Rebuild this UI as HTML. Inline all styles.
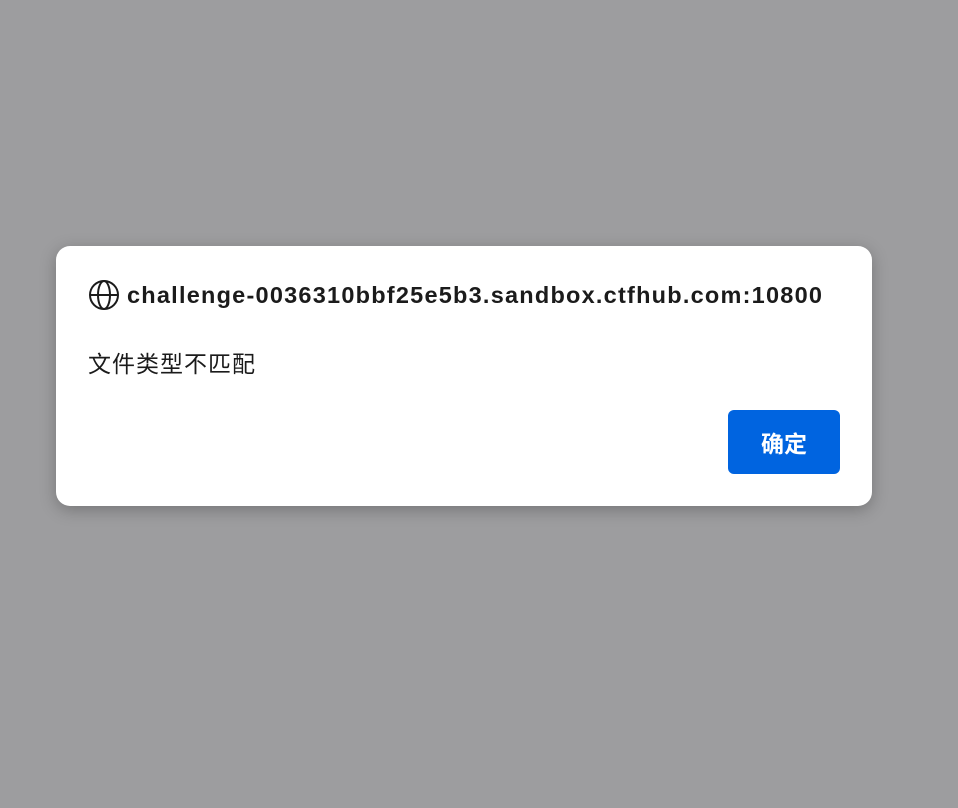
<!DOCTYPE html>
<html><head><meta charset="utf-8"><style>
html,body{margin:0;width:958px;height:808px;background:#9d9d9f;overflow:hidden;font-family:"Liberation Sans","Noto Sans CJK SC",sans-serif;}
.dlg{position:absolute;left:56px;top:246px;width:816px;height:260px;background:#fff;border-radius:14px;box-shadow:0 4px 16px rgba(0,0,0,.25);}
.t{position:absolute;left:32px;top:32px;height:34px;display:flex;align-items:center;font-weight:bold;font-size:23.5px;color:#1b1b1b;white-space:nowrap;letter-spacing:1.23px}
.t svg{margin-right:7px}
.m{position:absolute;left:32px;top:99px;font-size:23px;letter-spacing:1px;color:#1b1b1b}
.b{position:absolute;left:672px;top:164px;width:112px;height:64px;background:#0064e0;border-radius:6px;color:#fff;font-weight:bold;font-size:23px;display:flex;align-items:center;justify-content:center}
</style></head><body>
<div class="dlg">
<div class="t"><svg width="32" height="32" viewBox="0 0 32 32" fill="none" stroke="#1b1b1b" stroke-width="2"><circle cx="16" cy="16" r="14"/><ellipse cx="16" cy="16" rx="6" ry="14"/><line x1="2" y1="16" x2="30" y2="16"/></svg>challenge-0036310bbf25e5b3.sandbox.ctfhub.com:10800</div>
<div class="m">文件类型不匹配</div>
<div class="b">确定</div>
</div>
</body></html>
